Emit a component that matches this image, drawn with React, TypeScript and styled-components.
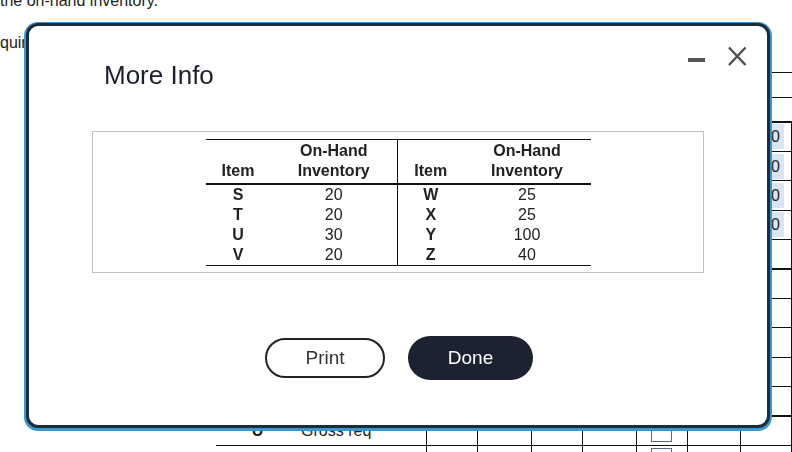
import * as React from "react";
import styled, { createGlobalStyle, css } from "styled-components";

const GlobalStyle = createGlobalStyle`
  html, body {
    margin: 0;
    padding: 0;
    background: #fff;
    overflow: hidden;
  }
  body {
    font-family: "Liberation Sans", Arial, sans-serif;
    font-size: 16px;
    color: #222;
  }
`;

interface InventoryRow {
  item: string;
  onHand: number;
}

const leftRows: InventoryRow[] = [
  { item: "S", onHand: 20 },
  { item: "T", onHand: 20 },
  { item: "U", onHand: 30 },
  { item: "V", onHand: 20 }
];
const rightRows: InventoryRow[] = [
  { item: "W", onHand: 25 },
  { item: "X", onHand: 25 },
  { item: "Y", onHand: 100 },
  { item: "Z", onHand: 40 }
];

const scheduleLabels = [
  "Gross req",
  "Sched rec",
  "Proj on hand",
  "Net req",
  "Planned order rel"
];
const scheduleGroups = ["S", "T", "U"];
const periodWidths = [51, 54, 51, 54, 51, 53, 51];

/* background page */
const Page = styled.div`
  width: 792px;
  height: 452px;
  overflow: hidden;
`;
const PageText = styled.p<{ gap: number }>`
  margin: ${props => props.gap}px 0 0 0;
  line-height: 18px;
  white-space: nowrap;
`;
const Schedule = styled.div`
  margin: 20px 0 0 216px;
`;
const ScheduleHeadLine = styled.div<{ height: number }>`
  height: ${props => props.height}px;
  border-top: 1px solid #111;
  box-sizing: border-box;
`;
const ScheduleTable = styled.table`
  border-collapse: collapse;
  table-layout: fixed;
  width: 576px;
`;
const ScheduleRow = styled.tr<{ first: boolean }>`
  height: 29.4px;
  ${props =>
    props.first &&
    css`
      border-top: 2px solid #111;
    `}
`;
const ScheduleCell = styled.td<{ edge?: boolean }>`
  padding: 0 2px;
  border-bottom: 1px solid #111;
  border-right: 1px solid #111;
  font-size: 16px;
  white-space: nowrap;
  overflow: hidden;
  ${props =>
    props.edge &&
    css`
      border-right: 0;
      text-align: center;
      font-weight: bold;
    `}
`;
const ValueCell = styled.td`
  padding: 0 7px 0 0;
  border-bottom: 1px solid #111;
  border-right: 1px solid #111;
  text-align: right;
`;
const Highlight = styled.span`
  display: inline-block;
  background: #dbe5f1;
  padding: 3px 4px;
  line-height: 19px;
`;
const InputBox = styled.span`
  display: block;
  width: 19px;
  height: 21px;
  margin: 0 auto;
  border: 1px solid #4d6d8f;
`;

/* modal */
const Modal = styled.div`
  position: fixed;
  left: 26px;
  top: 23px;
  width: 744px;
  height: 405px;
  box-sizing: border-box;
  background: #fff;
  border: 3px solid #1d2c3a;
  border-radius: 12px;
  box-shadow: 0 1px 0 2px #3b98cf;
  display: flex;
  flex-direction: column;
`;
const Header = styled.div`
  display: flex;
  justify-content: space-between;
  align-items: flex-start;
  padding: 20px 20px 0 75px;
`;
const Title = styled.h1`
  margin: 14px 0 0 0;
  font-size: 26px;
  line-height: 30px;
  font-weight: normal;
  color: #1b1f2a;
`;
const Controls = styled.div`
  display: flex;
  gap: 20px;
`;
const IconButton = styled.button.attrs({ type: "button" })`
  padding: 0;
  border: 0;
  background: transparent;
  width: 20px;
  height: 20px;
  cursor: pointer;
  display: block;
`;
const Panel = styled.div`
  align-self: center;
  width: 612px;
  height: 142px;
  margin-top: 41px;
  box-sizing: border-box;
  border: 1px solid #bfbfbf;
  padding-top: 7px;
  display: flex;
  justify-content: center;
  align-items: flex-start;
`;
const InventoryTable = styled.table`
  border-collapse: collapse;
  table-layout: fixed;
  border-top: 1px solid #111;
  border-bottom: 1px solid #111;
  color: #222;
`;
const HeadCell = styled.th<{ divider?: boolean }>`
  padding: 1px 0 2px 0;
  font-size: 16px;
  line-height: 20px;
  font-weight: bold;
  text-align: center;
  vertical-align: bottom;
  border-bottom: 2px solid #111;
  ${props =>
    props.divider &&
    css`
      border-left: 1px solid #111;
    `}
`;
const DataCell = styled.td<{ bold?: boolean; divider?: boolean }>`
  padding: 0;
  height: 20px;
  font-size: 16px;
  line-height: 20px;
  text-align: center;
  font-weight: ${props => (props.bold ? "bold" : "normal")};
  ${props =>
    props.divider &&
    css`
      border-left: 1px solid #111;
    `}
`;
const Footer = styled.div`
  display: flex;
  justify-content: center;
  align-items: center;
  gap: 23px;
  margin-top: 63px;
  padding-left: 2px;
`;
const Button = styled.button.attrs({ type: "button" })<{
  primary?: boolean;
}>`
  font-family: "Liberation Sans", Arial, sans-serif;
  font-size: 19px;
  box-sizing: border-box;
  cursor: pointer;
  border-radius: 22px;
  ${props =>
    props.primary
      ? css`
          width: 125px;
          height: 44px;
          background: #1c2230;
          color: #fff;
          border: 0;
        `
      : css`
          width: 120px;
          height: 40px;
          background: #fff;
          color: #333;
          border: 2px solid #222;
        `}
`;

function MinimizeIcon() {
  return (
    <svg width="20" height="20" viewBox="0 0 20 20">
      <rect x="1" y="12" width="17" height="4" fill="#555" />
    </svg>
  );
}

function CloseIcon() {
  return (
    <svg width="20" height="20" viewBox="0 0 20 20">
      <path
        d="M2 1.5 L18.5 19 M18.5 1.5 L2 19"
        stroke="#4d4d4d"
        strokeWidth="2.4"
        fill="none"
      />
    </svg>
  );
}

function BackgroundPage() {
  return (
    <Page>
      <PageText gap={-8}>the on-hand inventory.</PageText>
      <PageText gap={24}>quirements for each item are shown below.</PageText>
      <Schedule>
        <ScheduleHeadLine height={25} />
        <ScheduleHeadLine height={24} />
        <ScheduleTable>
          <colgroup>
            <col style={{ width: 83 }} />
            <col style={{ width: 127 }} />
            {periodWidths.map((w, i) => (
              <col key={i} style={{ width: w }} />
            ))}
          </colgroup>
          <tbody>
            {scheduleGroups.map((group, g) =>
              scheduleLabels.map((label, r) => (
                <ScheduleRow key={group + label} first={r === 0}>
                  <ScheduleCell edge>{r === 0 ? group : ""}</ScheduleCell>
                  <ScheduleCell>{label}</ScheduleCell>
                  {periodWidths.map((_, p) =>
                    p === periodWidths.length - 1 ? (
                      <ValueCell key={p}>
                        {g === 0 && r < 4 ? <Highlight>0</Highlight> : null}
                      </ValueCell>
                    ) : (
                      <ScheduleCell key={p}>
                        {p === 4 && g === 2 ? <InputBox /> : null}
                      </ScheduleCell>
                    )
                  )}
                </ScheduleRow>
              ))
            )}
          </tbody>
        </ScheduleTable>
      </Schedule>
    </Page>
  );
}

function InventoryTableView() {
  return (
    <InventoryTable>
      <colgroup>
        <col style={{ width: 65 }} />
        <col style={{ width: 127 }} />
        <col style={{ width: 66 }} />
        <col style={{ width: 127 }} />
      </colgroup>
      <thead>
        <tr>
          <HeadCell>Item</HeadCell>
          <HeadCell>
            On-Hand
            <br />
            Inventory
          </HeadCell>
          <HeadCell divider>Item</HeadCell>
          <HeadCell>
            On-Hand
            <br />
            Inventory
          </HeadCell>
        </tr>
      </thead>
      <tbody>
        {leftRows.map((row, index) => (
          <tr key={row.item}>
            <DataCell bold>{row.item}</DataCell>
            <DataCell>{row.onHand}</DataCell>
            <DataCell bold divider>
              {rightRows[index].item}
            </DataCell>
            <DataCell>{rightRows[index].onHand}</DataCell>
          </tr>
        ))}
      </tbody>
    </InventoryTable>
  );
}

export default function App() {
  return (
    <>
      <GlobalStyle />
      <BackgroundPage />
      <Modal role="dialog" aria-label="More Info">
        <Header>
          <Title>More Info</Title>
          <Controls>
            <IconButton aria-label="Minimize">
              <MinimizeIcon />
            </IconButton>
            <IconButton aria-label="Close">
              <CloseIcon />
            </IconButton>
          </Controls>
        </Header>
        <Panel>
          <InventoryTableView />
        </Panel>
        <Footer>
          <Button>Print</Button>
          <Button primary>Done</Button>
        </Footer>
      </Modal>
    </>
  );
}
